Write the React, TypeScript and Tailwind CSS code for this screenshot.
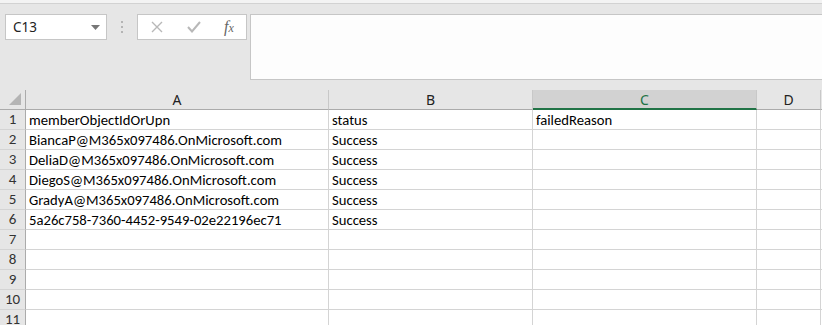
import React from "react";

const rows: [string, string, string][] = [
  ["memberObjectIdOrUpn", "status", "failedReason"],
  ["BiancaP@M365x097486.OnMicrosoft.com", "Success", ""],
  ["DeliaD@M365x097486.OnMicrosoft.com", "Success", ""],
  ["DiegoS@M365x097486.OnMicrosoft.com", "Success", ""],
  ["GradyA@M365x097486.OnMicrosoft.com", "Success", ""],
  ["5a26c758-7360-4452-9549-02e22196ec71", "Success", ""],
  ["", "", ""],
  ["", "", ""],
  ["", "", ""],
  ["", "", ""],
  ["", "", ""],
];

const cellFont = { fontFamily: "Carlito, 'Open Sans', 'Liberation Sans', sans-serif" };

export default function App() {
  return (
    <div className="w-[822px] h-[325px] overflow-hidden bg-[#e6e6e6] flex flex-col" style={{ fontFamily: "'Noto Sans', 'Liberation Sans', sans-serif" }}>
      {/* top strip */}
      <div className="h-[4px] bg-[#f3f3f3] border-b border-[#d2d2d2] shrink-0" />
      {/* formula bar area */}
      <div className="flex pt-[10px] pl-[5px] h-[86px] shrink-0">
        <div className="w-[102px] h-[26px] bg-white border border-[#c6c6c6] flex items-center justify-between pl-[7px] pr-[6px]">
          <span className="text-[13.5px] text-[#222]">C13</span>
          <svg width="9" height="5" viewBox="0 0 9 5"><path d="M0 0h9L4.5 5z" fill="#777" /></svg>
        </div>
        <div className="w-[30px] h-[26px] flex flex-col items-center justify-center gap-[3px]">
          <div className="w-[2px] h-[2px] bg-[#b4b4b4]" />
          <div className="w-[2px] h-[2px] bg-[#b4b4b4]" />
          <div className="w-[2px] h-[2px] bg-[#b4b4b4]" />
        </div>
        <div className="w-[110px] h-[26px] bg-white border border-[#c6c6c6] flex items-center">
          <div className="w-[37px] flex justify-center">
            <svg width="12" height="12" viewBox="0 0 12 12"><path d="M1 1l10 10M11 1L1 11" stroke="#b8b8b8" strokeWidth="1.4" /></svg>
          </div>
          <div className="w-[37px] flex justify-center">
            <svg width="14" height="12" viewBox="0 0 14 12"><path d="M1 6l4 4.5L13 1" stroke="#b8b8b8" strokeWidth="2" fill="none" /></svg>
          </div>
          <div className="w-[34px] flex justify-center">
            <span className="text-[16px] italic text-[#666] leading-none" style={{ fontFamily: "'Liberation Serif', serif" }}>f<span className="text-[12px]">x</span></span>
          </div>
        </div>
        <div className="ml-[3px] flex-1 h-[66px] bg-[#fdfdfd] border border-[#c6c6c6] border-r-0" />
      </div>
      {/* grid */}
      <div className="flex-1 bg-white" style={cellFont}>
        {/* header row */}
        <div className="flex h-[20px] bg-[#e6e6e6]">
          <div className="w-[26px] h-[20px] border-r border-b border-[#ababab] relative">
            <svg className="absolute right-[4px] bottom-[4px]" width="12" height="12" viewBox="0 0 12 12"><path d="M12 0v12H0z" fill="#b4b4b4" /></svg>
          </div>
          <div className="w-[303px] h-[20px] border-r border-b border-r-[#c8c8c8] border-b-[#ababab] flex items-center justify-center text-[14px] text-[#222]" style={{ fontFamily: "'Noto Sans', sans-serif" }}>A</div>
          <div className="w-[204px] h-[20px] border-r border-b border-r-[#c8c8c8] border-b-[#ababab] flex items-center justify-center text-[14px] text-[#222]" style={{ fontFamily: "'Noto Sans', sans-serif" }}>B</div>
          <div className="w-[224px] h-[20px] bg-[#d2d2d2] border-r border-r-[#c8c8c8] border-b-2 border-b-[#217346] flex items-center justify-center text-[14px] text-[#217346]" style={{ fontFamily: "'Noto Sans', sans-serif" }}>C</div>
          <div className="w-[64px] h-[20px] border-r border-b border-r-[#c8c8c8] border-b-[#ababab] flex items-center justify-center text-[14px] text-[#222]" style={{ fontFamily: "'Noto Sans', sans-serif" }}>D</div>
          <div className="flex-1 h-[20px] border-b border-[#ababab]" />
        </div>
        {rows.map((r, i) => (
          <div key={i} className="flex h-[20px]">
            <div className="w-[26px] h-[20px] bg-[#e6e6e6] border-r border-b border-r-[#ababab] border-b-[#d4d4d4] flex items-end justify-center pb-[1px] text-[15px] text-[#333] leading-[18px]">{i + 1}</div>
            <div className="w-[303px] h-[20px] border-r border-b border-[#d4d4d4] flex items-end pl-[3px] text-[14.67px] text-black leading-[18px] whitespace-nowrap">{r[0]}</div>
            <div className="w-[204px] h-[20px] border-r border-b border-[#d4d4d4] flex items-end pl-[3px] text-[14.67px] text-black leading-[18px] whitespace-nowrap">{r[1]}</div>
            <div className="w-[224px] h-[20px] border-r border-b border-[#d4d4d4] flex items-end pl-[3px] text-[14.67px] text-black leading-[18px] whitespace-nowrap">{r[2]}</div>
            <div className="w-[64px] h-[20px] border-r border-b border-[#d4d4d4]" />
            <div className="flex-1 h-[20px] border-b border-[#d4d4d4]" />
          </div>
        ))}
      </div>
    </div>
  );
}
